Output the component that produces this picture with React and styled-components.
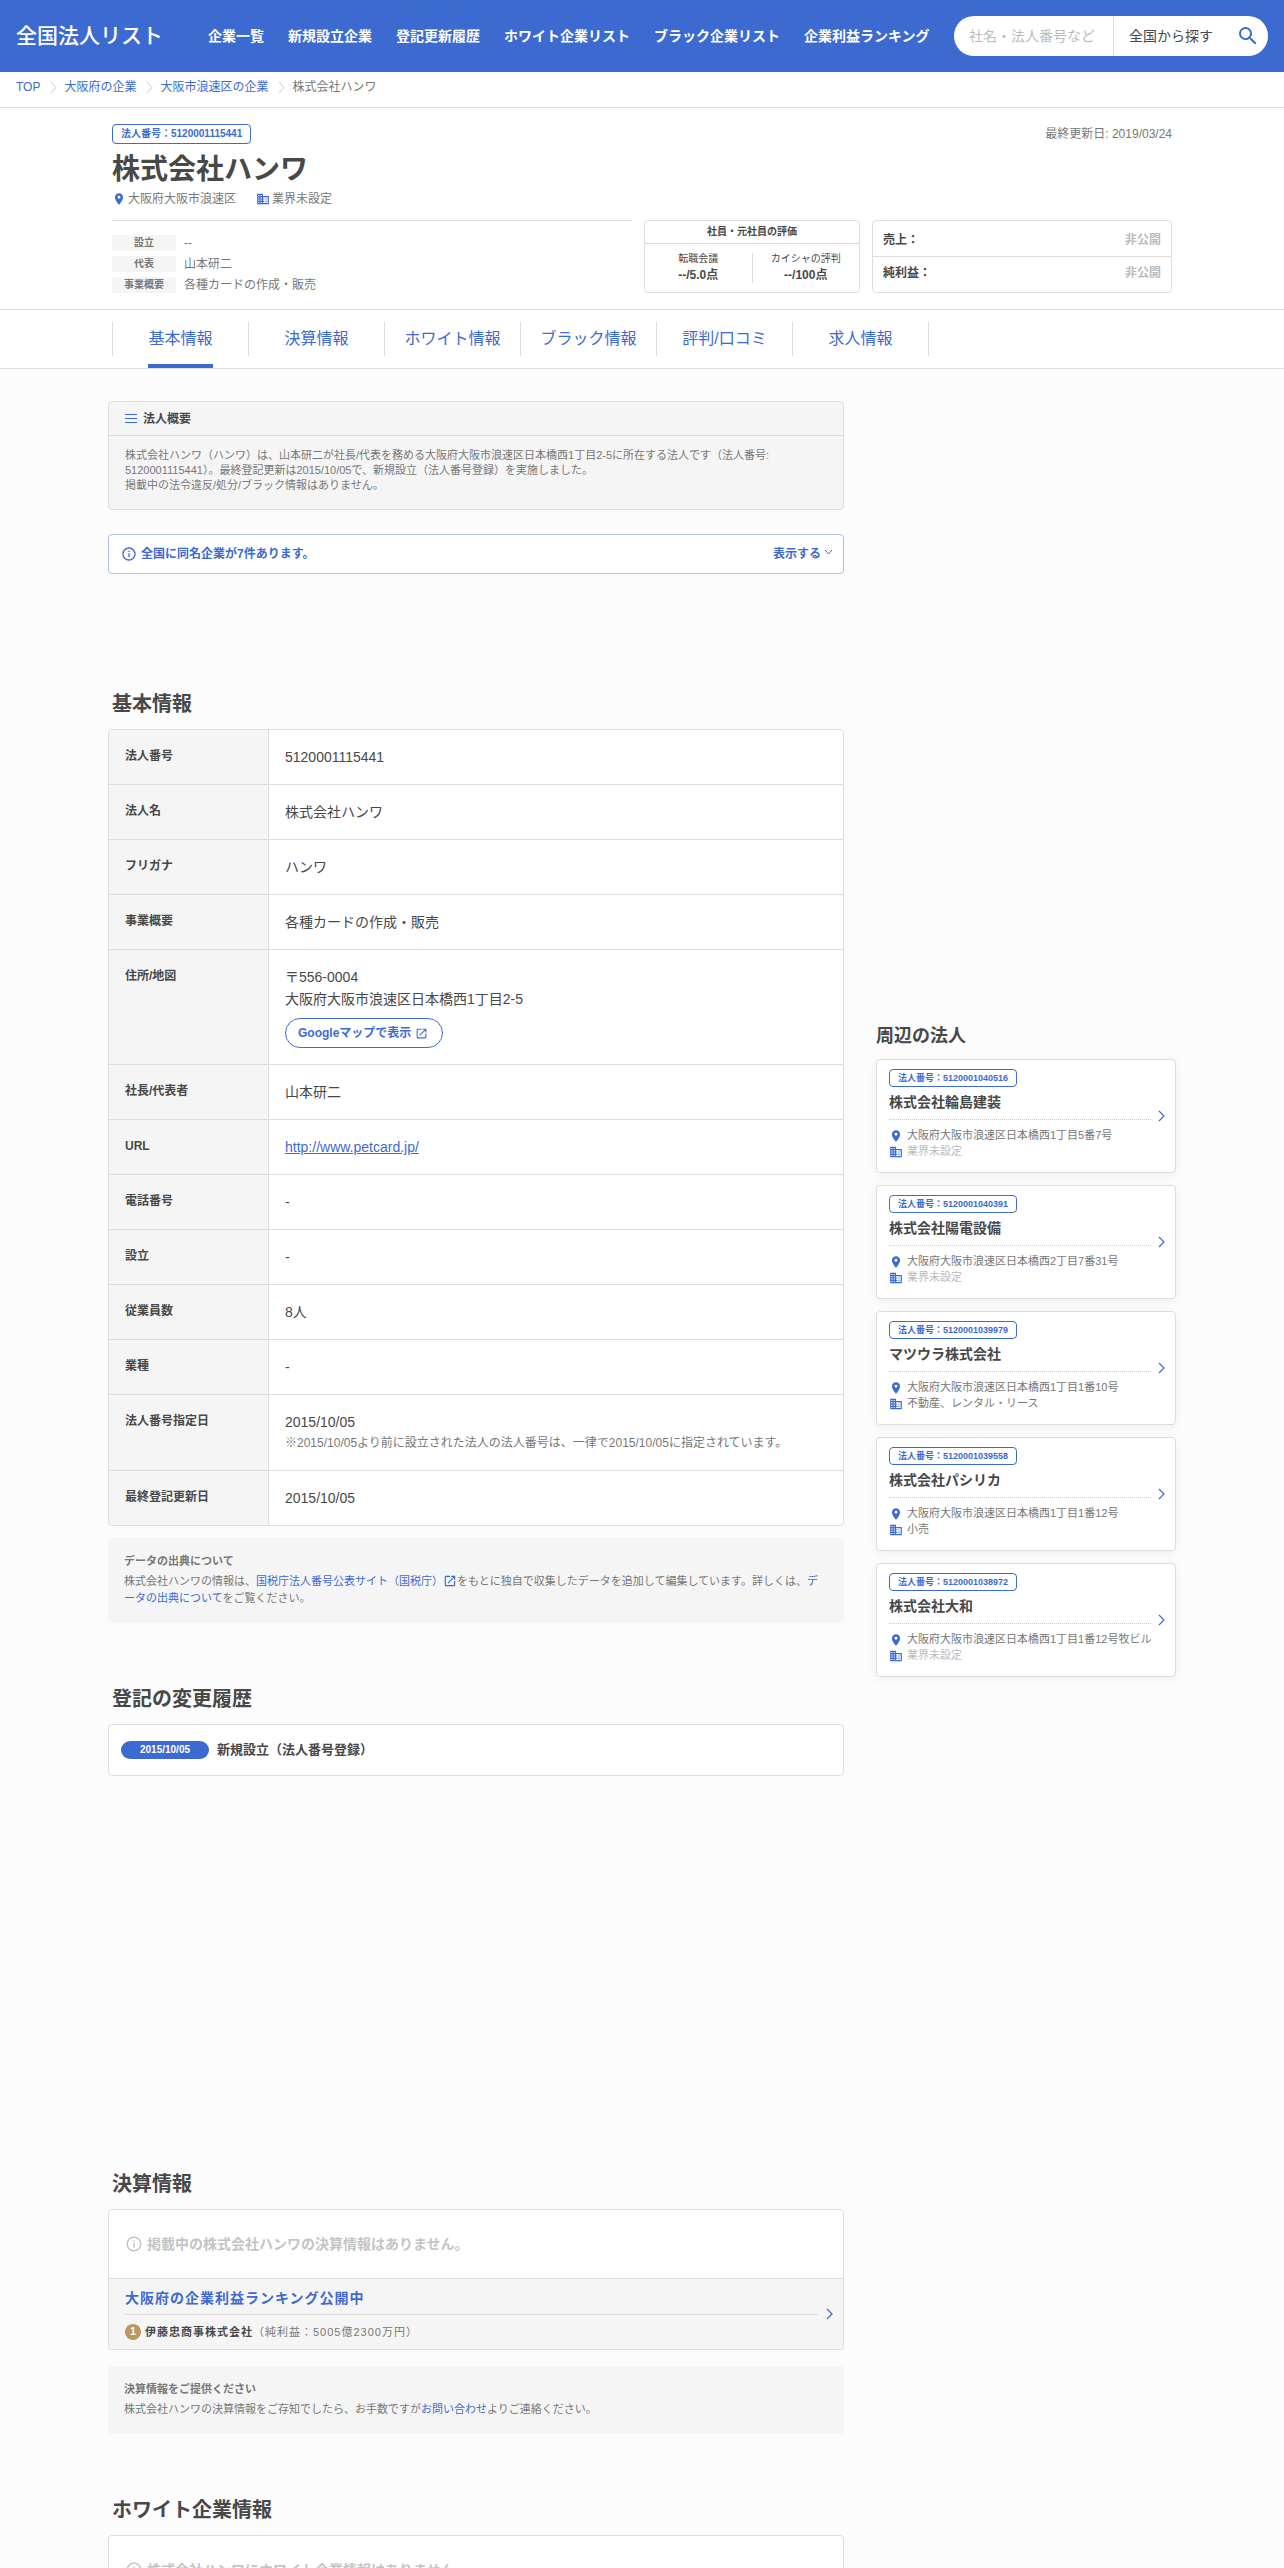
import React from "react";
import styled, { createGlobalStyle } from "styled-components";
import { MdPlace, MdBusiness, MdSearch, MdOpenInNew, MdInfoOutline } from "react-icons/md";

const blue = "#3d6ad1";
const ink = "#484848";
const gray = "#777";
const faint = "#bbb";
const line = "#ddd";
const panel = "#f5f5f5";

const GlobalStyle = createGlobalStyle`
  *, *::before, *::after { box-sizing: border-box; }
  body {
    margin: 0;
    background: #fcfcfc;
    color: ${ink};
    font-family: "Liberation Sans", "Noto Sans CJK JP", sans-serif;
    font-size: 14px;
    line-height: 22px;
  }
  h1, h2, h3, p, ul, ol, dl, dd { margin: 0; padding: 0; }
  ul, ol { list-style: none; }
  a { color: ${blue}; text-decoration: none; }
  svg { display: block; flex: none; }
  input, select, button { font: inherit; margin: 0; }
`;

/* ---------- site header ---------- */
const Header = styled.header`
  display: flex;
  align-items: center;
  height: 72px;
  padding: 0 16px;
  background: ${blue};
`;
const Logo = styled.a`
  width: 148px;
  font-size: 21px;
  font-weight: 500;
  line-height: 28px;
  white-space: nowrap;
  color: #fff;
`;
const GlobalNav = styled.nav`
  display: flex;
  gap: 24px;
  margin-left: 44px;
`;
const GlobalLink = styled.a`
  color: #fff;
  font-weight: bold;
  white-space: nowrap;
`;
const Search = styled.form`
  display: flex;
  width: 314px;
  height: 40px;
  margin-left: auto;
  border-radius: 20px;
  background: #fff;
  overflow: hidden;
`;
const SearchInput = styled.input`
  flex: 1;
  min-width: 0;
  padding: 0 15px;
  border: 0;
  border-right: 1px solid ${line};
  background: none;
  color: ${ink};
  &::placeholder { color: ${faint}; opacity: 1; }
`;
const AreaSelect = styled.select`
  width: 114px;
  padding: 0 15px;
  border: 0;
  background: none;
  color: ${ink};
  appearance: none;
`;
const SearchButton = styled.button`
  display: flex;
  align-items: center;
  justify-content: center;
  width: 40px;
  padding: 0;
  border: 0;
  background: none;
  color: ${blue};
  cursor: pointer;
`;

/* ---------- breadcrumb ---------- */
const Crumbs = styled.ol`
  display: flex;
  height: 36px;
  padding: 0 16px;
  border-bottom: 1px solid ${line};
  background: #fff;
  font-size: 12px;
  line-height: 30px;
`;
const Crumb = styled.li`
  display: flex;
  color: ${gray};
  > svg { margin: 9px 7px 0 10px; color: ${line}; }
`;

/* ---------- company header ---------- */
const CompanyHeader = styled.section`
  border-bottom: 1px solid ${line};
  background: #fff;
`;
const Inner = styled.div`
  max-width: 1060px;
  margin: 0 auto;
`;
const CompanyInner = styled(Inner)`
  padding: 16px 0;
`;
const TopLine = styled.div`
  display: flex;
  justify-content: space-between;
  align-items: center;
  font-size: 12px;
  line-height: 20px;
  color: ${gray};
`;
const NumberBadge = styled.span`
  display: inline-flex;
  align-items: center;
  height: ${(p) => (p.$small ? 18 : 20)}px;
  padding: 0 8px;
  border: 1px solid ${blue};
  border-radius: 4px;
  color: ${blue};
  font-size: ${(p) => (p.$small ? 9 : 10)}px;
  font-weight: bold;
  line-height: 16px;
  white-space: nowrap;
`;
const CompanyName = styled.h1`
  margin-top: 8px;
  font-size: 28px;
  line-height: 36px;
`;
const Meta = styled.ul`
  display: flex;
  gap: 20px;
  margin: 2px 0 12px;
  font-size: 12px;
  line-height: 18px;
  color: ${gray};
`;
const MetaItem = styled.li`
  display: flex;
  align-items: center;
  gap: 2px;
  svg { color: ${blue}; }
`;
const Summary = styled.div`
  display: flex;
  gap: 12px;
  height: 73px;
`;
const Facts = styled.dl`
  flex: 1;
  display: flex;
  flex-direction: column;
  gap: 5px;
  padding-top: 14px;
  border-top: 1px solid ${line};
`;
const Fact = styled.div`
  display: flex;
  gap: 8px;
  font-size: 12px;
  line-height: 16px;
  color: ${gray};
`;
const FactLabel = styled.dt`
  width: 64px;
  border-radius: 2px;
  background: ${panel};
  font-size: 10px;
  font-weight: bold;
  text-align: center;
`;
const Box = styled.div`
  border: 1px solid ${line};
  border-radius: 4px;
  background: #fff;
  overflow: hidden;
`;
const Reviews = styled(Box)`
  width: 216px;
`;
const ReviewsTitle = styled.h2`
  border-bottom: 1px solid ${line};
  font-size: 10px;
  line-height: 22px;
  text-align: center;
`;
const ReviewsBody = styled.div`
  display: flex;
  padding: 9px 0;
`;
const Review = styled.div`
  flex: 1;
  height: 30px;
  text-align: center;
  font-size: 10px;
  line-height: 12px;
  & + & { border-left: 1px solid ${line}; }
  strong { display: block; font-size: 12px; line-height: 20px; }
`;
const Money = styled(Box)`
  width: 300px;
`;
const MoneyRow = styled.div`
  display: flex;
  justify-content: space-between;
  height: 35px;
  padding: 0 10px;
  font-size: 12px;
  font-weight: bold;
  line-height: 38px;
  & + & { border-top: 1px solid ${line}; line-height: 32px; height: 36px; }
  span { color: ${faint}; }
`;

/* ---------- tabs ---------- */
const TabBar = styled.nav`
  border-bottom: 1px solid ${line};
  background: #fff;
`;
const Tabs = styled.ul`
  display: flex;
  max-width: 1060px;
  height: 58px;
  margin: 0 auto;
  padding-top: 12px;
`;
const Tab = styled.li`
  display: flex;
  justify-content: center;
  align-items: flex-start;
  width: 136px;
  height: 34px;
  border-left: 1px solid ${line};
  &:last-child { width: 137px; border-right: 1px solid ${line}; }
`;
const TabLink = styled.a`
  height: 46px;
  border-bottom: 4px solid ${(p) => (p.$active ? blue : "transparent")};
  font-size: 16px;
  line-height: 34px;
`;

/* ---------- page body ---------- */
const Columns = styled.div`
  display: flex;
  align-items: flex-start;
  gap: 32px;
  max-width: 1068px;
  margin: 0 auto;
  padding: 32px 0;
`;
const Main = styled.main`
  flex: 1;
  min-width: 0;
`;
const Side = styled.aside`
  width: 300px;
`;
const AdSlot = styled.div`
  height: ${(p) => p.$height}px;
`;
const Overview = styled(Box)`
  background: ${panel};
`;
const OverviewTitle = styled.h2`
  display: flex;
  align-items: center;
  gap: 6px;
  height: 34px;
  padding: 0 16px;
  border-bottom: 1px solid ${line};
  font-size: 12px;
  svg { color: ${blue}; }
`;
const OverviewText = styled.p`
  padding: 12px 16px 16px;
  font-size: 11px;
  line-height: 15px;
  color: ${gray};
`;
const SameName = styled.button`
  display: flex;
  align-items: center;
  width: 100%;
  height: 40px;
  margin-top: 24px;
  padding: 0 10px 0 12px;
  border: 1px solid #afc0e4;
  border-radius: 4px;
  background: #fff;
  color: ${blue};
  font-size: 12px;
  font-weight: bold;
  text-align: left;
  cursor: pointer;
`;
const SameNameText = styled.span`
  flex: 1;
  padding-left: 4px;
`;
const Toggle = styled.span`
  display: flex;
  align-items: center;
  gap: 3px;
  svg { margin-bottom: 4px; }
`;
const Section = styled.section`
  padding-top: 61px;
`;
const SectionTitle = styled.h2`
  margin: 0 4px 10px;
  font-size: 20px;
  line-height: 30px;
`;
const InfoTable = styled.table`
  width: 100%;
  border: 1px solid ${line};
  border-radius: 4px;
  border-spacing: 0;
  background: #fff;
  overflow: hidden;
  th, td { padding: 16px; text-align: left; vertical-align: top; }
  tr + tr > * { border-top: 1px solid ${line}; }
  th {
    width: 160px;
    border-right: 1px solid ${line};
    background: ${panel};
    font-size: 12px;
    line-height: 20px;
  }
`;
const PlainLink = styled.a`
  text-decoration: underline;
`;
const MapLink = styled.a`
  display: flex;
  align-items: center;
  gap: 4px;
  width: fit-content;
  height: 30px;
  margin-top: 8px;
  padding: 0 14px 0 12px;
  border: 1px solid ${blue};
  border-radius: 15px;
  background: #fff;
  font-size: 12px;
  font-weight: bold;
`;
const Small = styled.p`
  font-size: 12px;
  line-height: 21px;
  color: ${gray};
`;
const Note = styled.div`
  margin-top: ${(p) => p.$gap}px;
  padding: 14px 16px 16px;
  border-radius: 4px;
  background: ${panel};
  font-size: 11px;
  line-height: 17px;
  color: ${gray};
  h3 { margin-bottom: 3px; font-size: 11px; line-height: 18px; }
  svg { display: inline-block; vertical-align: -3px; }
`;
const HistoryRow = styled(Box)`
  display: flex;
  align-items: center;
  gap: 8px;
  height: 52px;
  padding: 0 12px;
  font-size: 13px;
  font-weight: bold;
`;
const DatePill = styled.time`
  width: 88px;
  border-radius: 9px;
  background: ${blue};
  color: #fff;
  font-size: 10px;
  line-height: 18px;
  text-align: center;
`;
const Empty = styled.p`
  display: flex;
  align-items: center;
  gap: 4px;
  height: 68px;
  padding: 0 16px;
  color: #c4c4c4;
  font-weight: bold;
`;
const Ranking = styled.a`
  display: flex;
  align-items: center;
  gap: 8px;
  height: 71px;
  padding: 0 10px 0 16px;
  border-top: 1px solid ${line};
  background: ${panel};
  color: ${ink};
  letter-spacing: 1px;
  > svg { color: ${blue}; }
`;
const RankingBody = styled.span`
  flex: 1;
`;
const RankingTitle = styled.strong`
  display: block;
  height: 35px;
  border-bottom: 1px solid ${line};
  color: ${blue};
  line-height: 36px;
`;
const RankingItem = styled.span`
  display: flex;
  align-items: center;
  height: 34px;
  font-size: 11px;
  span { color: ${gray}; }
`;
const Medal = styled.i`
  width: 16px;
  height: 16px;
  margin-right: 4px;
  border-radius: 50%;
  background: #b99a5c;
  color: #fff;
  font-size: 10px;
  font-style: normal;
  font-weight: bold;
  letter-spacing: 0;
  line-height: 16px;
  text-align: center;
`;

/* ---------- nearby companies ---------- */
const SideTitle = styled.h2`
  margin: 22px 0 10px;
  font-size: 18px;
  line-height: 26px;
`;
const CardList = styled.ul`
  display: grid;
  gap: 12px;
`;
const Card = styled.a`
  display: flex;
  align-items: center;
  gap: 7px;
  height: 114px;
  padding: 0 10px 0 12px;
  border: 1px solid ${line};
  border-radius: 4px;
  background: #fff;
  box-shadow: 0 2px 10px rgba(0, 0, 0, 0.06);
  color: ${ink};
  > svg { color: ${blue}; }
`;
const CardBody = styled.div`
  flex: 1;
  height: 94px;
  font-size: 11px;
  line-height: 16px;
  color: ${gray};
`;
const CardName = styled.h3`
  height: 33px;
  margin-bottom: 7px;
  border-bottom: 1px dotted #ccc;
  color: ${ink};
  font-size: 14px;
  line-height: 30px;
`;
const CardLine = styled.p`
  display: flex;
  gap: 4px;
  color: ${(p) => (p.$unset ? faint : gray)};
  white-space: nowrap;
  svg { margin-top: 2px; color: ${blue}; }
`;

const Chevron = ({ width = 7, height = 12, d = "M1 1l5 5-5 5", stroke = 1.2 }) => (
  <svg width={width} height={height} viewBox={`0 0 ${width} ${height}`} fill="none" stroke="currentColor" strokeWidth={stroke} aria-hidden="true">
    <path d={d} />
  </svg>
);
const MenuLines = () => (
  <svg width="12" height="12" viewBox="0 0 12 12" stroke="currentColor" aria-hidden="true">
    <path d="M0 1.5h12M0 5.5h12M0 9.5h12" />
  </svg>
);

const navItems = ["企業一覧", "新規設立企業", "登記更新履歴", "ホワイト企業リスト", "ブラック企業リスト", "企業利益ランキング"];
const crumbs = ["TOP", "大阪府の企業", "大阪市浪速区の企業"];
const facts = [["設立", "--"], ["代表", "山本研二"], ["事業概要", "各種カードの作成・販売"]];
const tabs = ["基本情報", "決算情報", "ホワイト情報", "ブラック情報", "評判/口コミ", "求人情報"];
const rows = [
  ["法人番号", "5120001115441"],
  ["法人名", "株式会社ハンワ"],
  ["フリガナ", "ハンワ"],
  ["事業概要", "各種カードの作成・販売"],
  ["住所/地図", <>
    〒556-0004<br />大阪府大阪市浪速区日本橋西1丁目2-5
    <MapLink href="#map">Googleマップで表示<MdOpenInNew size={13} /></MapLink>
  </>],
  ["社長/代表者", "山本研二"],
  ["URL", <PlainLink href="#site">http://www.petcard.jp/</PlainLink>],
  ["電話番号", "-"],
  ["設立", "-"],
  ["従業員数", "8人"],
  ["業種", "-"],
  ["法人番号指定日", <>
    2015/10/05
    <Small>※2015/10/05より前に設立された法人の法人番号は、一律で2015/10/05に指定されています。</Small>
  </>],
  ["最終登記更新日", "2015/10/05"],
];
const nearby = [
  { no: "5120001040516", name: "株式会社輪島建装", address: "大阪府大阪市浪速区日本橋西1丁目5番7号" },
  { no: "5120001040391", name: "株式会社陽電設備", address: "大阪府大阪市浪速区日本橋西2丁目7番31号" },
  { no: "5120001039979", name: "マツウラ株式会社", address: "大阪府大阪市浪速区日本橋西1丁目1番10号", industry: "不動産、レンタル・リース" },
  { no: "5120001039558", name: "株式会社パシリカ", address: "大阪府大阪市浪速区日本橋西1丁目1番12号", industry: "小売" },
  { no: "5120001038972", name: "株式会社大和", address: "大阪府大阪市浪速区日本橋西1丁目1番12号牧ビル" },
];

export default function App() {
  return (
    <>
      <GlobalStyle />
      <Header>
        <Logo href="#top">全国法人リスト</Logo>
        <GlobalNav>
          {navItems.map((t) => <GlobalLink href="#nav" key={t}>{t}</GlobalLink>)}
        </GlobalNav>
        <Search onSubmit={(e) => e.preventDefault()}>
          <SearchInput type="text" placeholder="社名・法人番号など" aria-label="社名・法人番号など" />
          <AreaSelect aria-label="地域"><option>全国から探す</option></AreaSelect>
          <SearchButton aria-label="検索"><MdSearch size={24} /></SearchButton>
        </Search>
      </Header>

      <Crumbs>
        {crumbs.map((t) => (
          <Crumb key={t}><a href="#crumb">{t}</a><Chevron width={7} height={13} d="M1 1l5 5.500-5 5.500" /></Crumb>
        ))}
        <Crumb>株式会社ハンワ</Crumb>
      </Crumbs>

      <CompanyHeader>
        <CompanyInner>
          <TopLine>
            <NumberBadge>法人番号：5120001115441</NumberBadge>
            <span>最終更新日: 2019/03/24</span>
          </TopLine>
          <CompanyName>株式会社ハンワ</CompanyName>
          <Meta>
            <MetaItem><MdPlace size={14} />大阪府大阪市浪速区</MetaItem>
            <MetaItem><MdBusiness size={14} />業界未設定</MetaItem>
          </Meta>
          <Summary>
            <Facts>
              {facts.map(([k, v]) => (
                <Fact key={k}><FactLabel>{k}</FactLabel><dd>{v}</dd></Fact>
              ))}
            </Facts>
            <Reviews>
              <ReviewsTitle>社員・元社員の評価</ReviewsTitle>
              <ReviewsBody>
                <Review>転職会議<strong>--/5.0点</strong></Review>
                <Review>カイシャの評判<strong>--/100点</strong></Review>
              </ReviewsBody>
            </Reviews>
            <Money>
              <MoneyRow>売上：<span>非公開</span></MoneyRow>
              <MoneyRow>純利益：<span>非公開</span></MoneyRow>
            </Money>
          </Summary>
        </CompanyInner>
      </CompanyHeader>

      <TabBar>
        <Tabs>
          {tabs.map((t, i) => (
            <Tab key={t}><TabLink href="#tab" $active={i === 0}>{t}</TabLink></Tab>
          ))}
        </Tabs>
      </TabBar>

      <Columns>
        <Main>
          <Overview>
            <OverviewTitle><MenuLines />法人概要</OverviewTitle>
            <OverviewText>
              株式会社ハンワ（ハンワ）は、山本研二が社長/代表を務める大阪府大阪市浪速区日本橋西1丁目2-5に所在する法人です（法人番号: 5120001115441）。最終登記更新は2015/10/05で、新規設立（法人番号登録）を実施しました。<br />
              掲載中の法令違反/処分/ブラック情報はありません。
            </OverviewText>
          </Overview>
          <SameName type="button">
            <MdInfoOutline size={16} />
            <SameNameText>全国に同名企業が7件あります。</SameNameText>
            <Toggle>表示する<Chevron width={9} height={6} d="M1 1l3.500 4 3.500-4" stroke={1} /></Toggle>
          </SameName>

          <AdSlot $height={54} />
          <Section>
            <SectionTitle>基本情報</SectionTitle>
            <InfoTable>
              <tbody>
                {rows.map(([k, v]) => <tr key={k}><th scope="row">{k}</th><td>{v}</td></tr>)}
              </tbody>
            </InfoTable>
            <Note $gap={12}>
              <h3>データの出典について</h3>
              <p>
                株式会社ハンワの情報は、<a href="#nta">国税庁法人番号公表サイト（国税庁）<MdOpenInNew size={14} /></a>をもとに独自で収集したデータを追加して編集しています。詳しくは、<a href="#source">データの出典について</a>をご覧ください。
              </p>
            </Note>
          </Section>

          <Section>
            <SectionTitle>登記の変更履歴</SectionTitle>
            <HistoryRow><DatePill>2015/10/05</DatePill>新規設立（法人番号登録）</HistoryRow>
          </Section>

          <AdSlot $height={332} />
          <Section>
            <SectionTitle>決算情報</SectionTitle>
            <Box>
              <Empty><MdInfoOutline size={18} />掲載中の株式会社ハンワの決算情報はありません。</Empty>
              <Ranking href="#ranking">
                <RankingBody>
                  <RankingTitle>大阪府の企業利益ランキング公開中</RankingTitle>
                  <RankingItem><Medal>1</Medal><b>伊藤忠商事株式会社</b><span>（純利益：5005億2300万円）</span></RankingItem>
                </RankingBody>
                <Chevron />
              </Ranking>
            </Box>
            <Note $gap={16}>
              <h3>決算情報をご提供ください</h3>
              <p>株式会社ハンワの決算情報をご存知でしたら、お手数ですが<a href="#contact">お問い合わせ</a>よりご連絡ください。</p>
            </Note>
          </Section>

          <Section>
            <SectionTitle>ホワイト企業情報</SectionTitle>
            <Box>
              <Empty><MdInfoOutline size={18} />株式会社ハンワにホワイト企業情報はありません。</Empty>
            </Box>
          </Section>
        </Main>

        <Side>
          <AdSlot $height={600} />
          <SideTitle>周辺の法人</SideTitle>
          <CardList>
            {nearby.map((c) => (
              <li key={c.no}>
                <Card href="#company">
                  <CardBody>
                    <NumberBadge $small>法人番号：{c.no}</NumberBadge>
                    <CardName>{c.name}</CardName>
                    <CardLine><MdPlace size={14} />{c.address}</CardLine>
                    <CardLine $unset={!c.industry}><MdBusiness size={14} />{c.industry || "業界未設定"}</CardLine>
                  </CardBody>
                  <Chevron />
                </Card>
              </li>
            ))}
          </CardList>
        </Side>
      </Columns>
    </>
  );
}
